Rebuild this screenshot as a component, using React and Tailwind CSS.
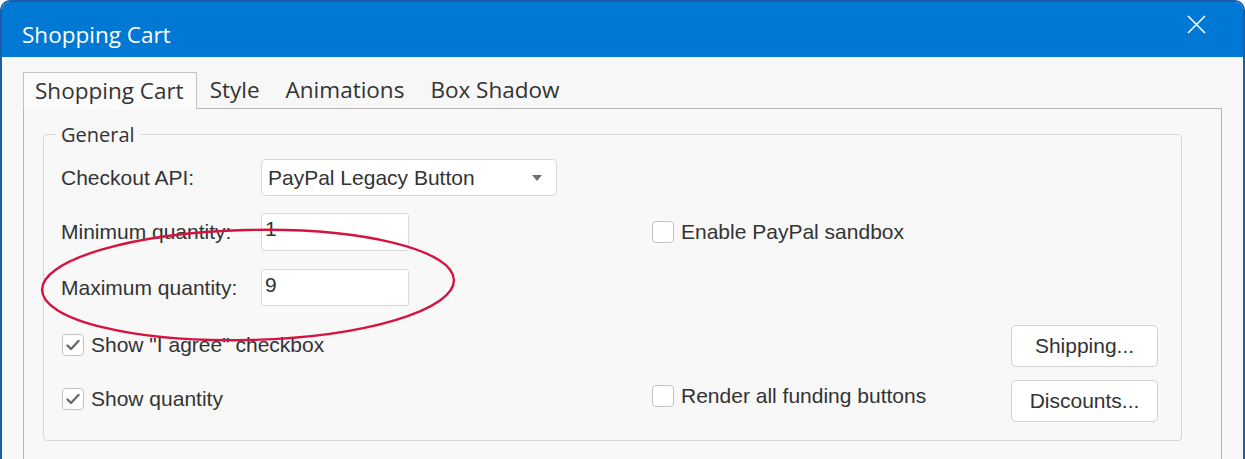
export default function App() {
  const label = "font-['Liberation_Sans',Arial,sans-serif] text-[21px] text-[#333333]";
  const Check = ({ checked }) => (
    <span className="flex h-[22px] w-[22px] shrink-0 items-center justify-center rounded-[4px] border border-[#c3c3c3] bg-white">
      {checked && (
        <svg width="14" height="12" viewBox="0 0 14 12">
          <polyline points="1.5,6.5 5,10 12.5,2" fill="none" stroke="#6a6a6a" strokeWidth="2.4" strokeLinecap="round" strokeLinejoin="round" />
        </svg>
      )}
    </span>
  );
  const Btn = ({ children }) => (
    <button className={"flex h-full w-full items-center justify-center rounded-[5px] border border-[#d2d2d2] bg-white " + label + " text-[20px]"}>
      {children}
    </button>
  );
  return (
    <div className="relative h-[459px] w-[1245px] overflow-hidden bg-white">
      <div className="flex h-full flex-col overflow-hidden rounded-t-[10px] border-x-2 border-t-2 border-[#1b5ea8] bg-[#f7f7f7]">
        <div className="flex h-[55px] shrink-0 items-start justify-between bg-[#0078d4] pl-[20px] pr-[37px] font-['Open_Sans',sans-serif] text-[22.5px] text-white">
          <span className="mt-[22px] leading-none">Shopping Cart</span>
          <svg className="mt-[13px]" width="19" height="19" viewBox="0 0 19 19">
            <path d="M1 1 L18 18 M18 1 L1 18" stroke="white" strokeWidth="1.6" />
          </svg>
        </div>
        <div className="flex flex-1 flex-col px-[21px] pt-[15px]">
          <div className="flex h-[36px] items-stretch font-['Open_Sans',sans-serif] text-[22.5px] text-[#333333]">
            <div className="relative z-10 -mb-px flex items-center border-x border-t border-[#c4c4c4] bg-[#fbfbfb] pl-[11px] pr-[12px]">
              Shopping Cart
            </div>
            <div className="flex items-center px-[13px]">Style</div>
            <div className="flex items-center px-[13px]">Animations</div>
            <div className="flex items-center px-[13px]">Box Shadow</div>
          </div>
          <div className="flex-1 border-x border-t border-[#b5b5b5] bg-[#f8f8f8] pl-[19px] pr-[39px] pt-[12px]">
            <fieldset className="rounded-[4px] border border-[#d6d6d6] pb-[18px] pl-[17px] pr-[23px]">
              <legend className="-ml-[6px] px-[6px] font-['Open_Sans',sans-serif] text-[20px] leading-[27px] text-[#333333]">
                General
              </legend>
              <div className="mt-[11px] grid h-[37px] grid-cols-[200px_391px_1fr_147px] items-center">
                <span className={label}>Checkout API:</span>
                <div className="flex h-full w-[296px] items-center justify-between rounded-[4px] border border-[#d8d8d8] bg-white pl-[6px] pr-[14px]">
                  <span className={label}>PayPal Legacy Button</span>
                  <svg width="10" height="6" viewBox="0 0 10 6">
                    <path d="M0 0 L10 0 L5 6 Z" fill="#707070" />
                  </svg>
                </div>
              </div>
              <div className="mt-[17px] grid h-[38px] grid-cols-[200px_391px_1fr_147px] items-center">
                <span className={label}>Minimum quantity:</span>
                <div className="h-full w-[148px] rounded-[3px] border border-[#d8d8d8] bg-white pl-[3px] leading-[30px]">
                  <span className={label}>1</span>
                </div>
                <label className="flex items-center gap-[7px]">
                  <Check />
                  <span className={label}>Enable PayPal sandbox</span>
                </label>
              </div>
              <div className="mt-[18px] grid h-[37px] grid-cols-[200px_391px_1fr_147px] items-center">
                <span className={label}>Maximum quantity:</span>
                <div className="h-full w-[148px] rounded-[3px] border border-[#d8d8d8] bg-white pl-[3px] leading-[30px]">
                  <span className={label}>9</span>
                </div>
              </div>
              <div className="mt-[19px] grid h-[42px] grid-cols-[200px_391px_1fr_147px] items-center">
                <label className="col-span-2 ml-px flex items-center gap-[7px] self-start pt-[4px]">
                  <Check checked />
                  <span className={label}>Show "I agree" checkbox</span>
                </label>
                <span />
                <Btn>Shipping...</Btn>
              </div>
              <div className="mt-[13px] grid h-[42px] grid-cols-[200px_391px_1fr_147px] items-center">
                <label className="col-span-2 ml-px flex items-center gap-[7px] self-start pt-[3px]">
                  <Check checked />
                  <span className={label}>Show quantity</span>
                </label>
                <label className="flex items-center gap-[7px] self-start pt-0">
                  <Check />
                  <span className={label}>Render all funding buttons</span>
                </label>
                <Btn>Discounts...</Btn>
              </div>
            </fieldset>
          </div>
        </div>
      </div>
      <svg className="pointer-events-none absolute left-0 top-0" width="1245" height="459" viewBox="0 0 1245 459">
        <ellipse cx="248" cy="285" rx="206" ry="55" fill="none" stroke="#d4143f" strokeWidth="2.4" transform="rotate(-1.4 248 285)" />
      </svg>
    </div>
  );
}
